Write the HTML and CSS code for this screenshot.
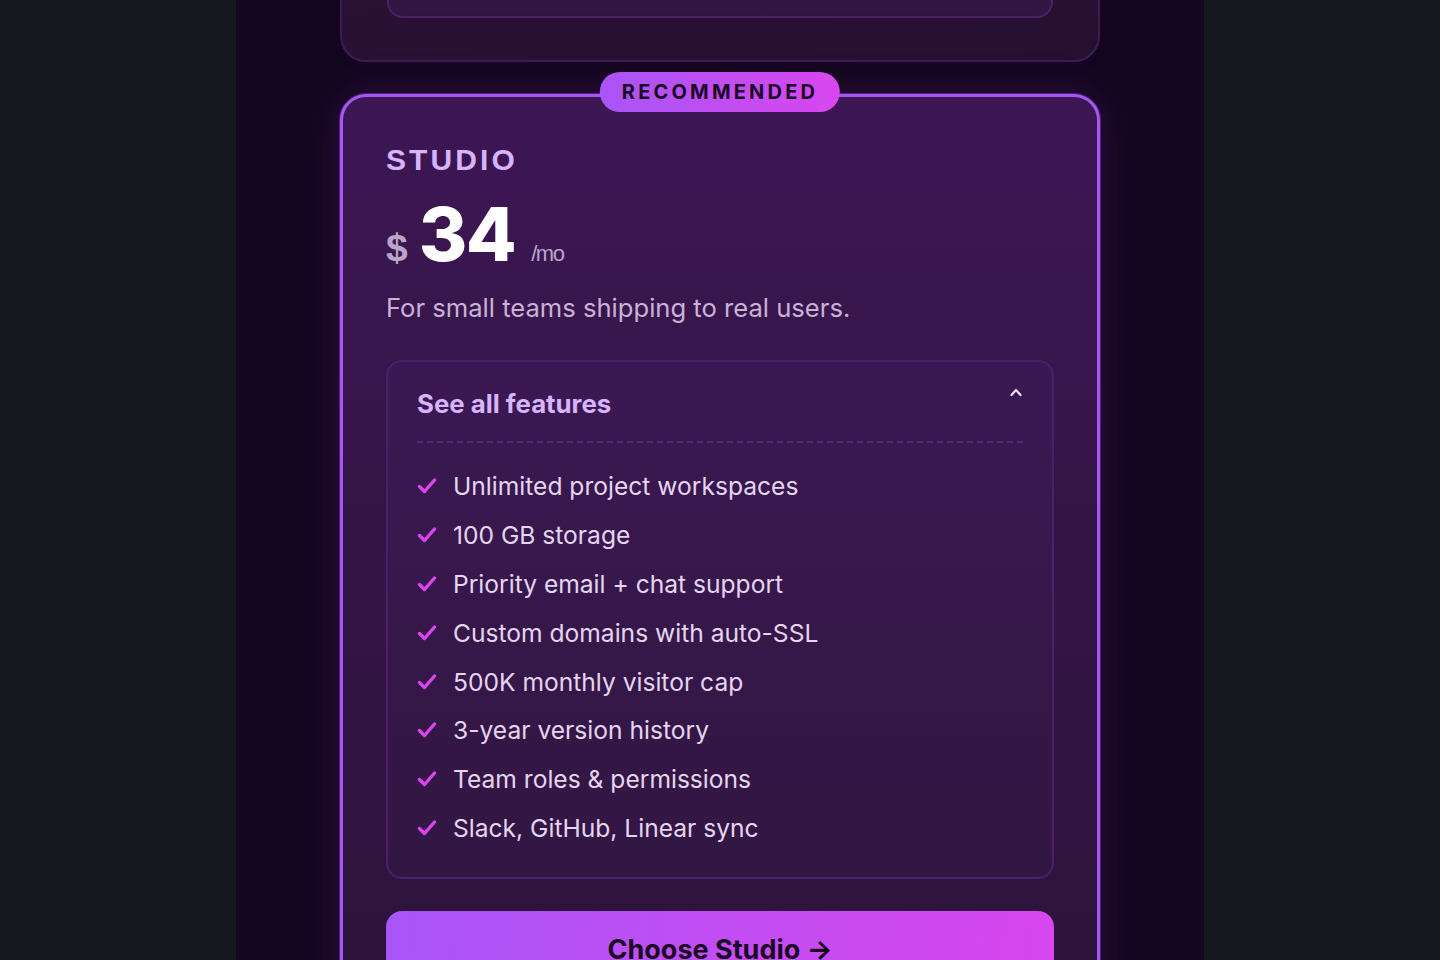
FILE: index.html
```html
<!DOCTYPE html>
<html lang="en">
<head>
    <meta charset="UTF-8">
    <meta name="viewport" content="width=device-width, initial-scale=1.0">
    <title>Pricing - Studio</title>
    <link rel="stylesheet" href="styles.css">
</head>
<body>
    <main class="page">
        <div class="plans">
            <section class="plan plan-prev">
                <h2 class="plan-name">TEAM</h2>
                <div class="features features-prev"></div>
            </section>

            <section class="plan plan-featured">
                <div class="badge">RECOMMENDED</div>
                <h2 class="plan-name">STUDIO</h2>
                <div class="price">
                    <span class="currency">$</span>
                    <span class="amount">34</span>
                    <span class="period">/mo</span>
                </div>
                <p class="tagline">For small teams shipping to real users.</p>

                <div class="features">
                    <div class="features-head">
                        <span>See all features</span>
                        <svg class="chevron" width="14" height="10" viewBox="0 0 14 10">
                            <path d="M2.5 8 L7 3 L11.5 8" fill="none" stroke="#ecdcfb" stroke-width="2.2" stroke-linecap="round" stroke-linejoin="round"/>
                        </svg>
                    </div>
                    <ul class="feature-list">
                        <li><svg class="check" viewBox="0 0 20 16"><path d="M2.5 8.5 L7.5 13.5 L17.5 2" fill="none" stroke="#d946ef" stroke-width="3.4" stroke-linecap="round" stroke-linejoin="round"/></svg>Unlimited project workspaces</li>
                        <li><svg class="check" viewBox="0 0 20 16"><path d="M2.5 8.5 L7.5 13.5 L17.5 2" fill="none" stroke="#d946ef" stroke-width="3.4" stroke-linecap="round" stroke-linejoin="round"/></svg>100 GB storage</li>
                        <li><svg class="check" viewBox="0 0 20 16"><path d="M2.5 8.5 L7.5 13.5 L17.5 2" fill="none" stroke="#d946ef" stroke-width="3.4" stroke-linecap="round" stroke-linejoin="round"/></svg>Priority email + chat support</li>
                        <li><svg class="check" viewBox="0 0 20 16"><path d="M2.5 8.5 L7.5 13.5 L17.5 2" fill="none" stroke="#d946ef" stroke-width="3.4" stroke-linecap="round" stroke-linejoin="round"/></svg>Custom domains with auto-SSL</li>
                        <li><svg class="check" viewBox="0 0 20 16"><path d="M2.5 8.5 L7.5 13.5 L17.5 2" fill="none" stroke="#d946ef" stroke-width="3.4" stroke-linecap="round" stroke-linejoin="round"/></svg>500K monthly visitor cap</li>
                        <li><svg class="check" viewBox="0 0 20 16"><path d="M2.5 8.5 L7.5 13.5 L17.5 2" fill="none" stroke="#d946ef" stroke-width="3.4" stroke-linecap="round" stroke-linejoin="round"/></svg>3-year version history</li>
                        <li><svg class="check" viewBox="0 0 20 16"><path d="M2.5 8.5 L7.5 13.5 L17.5 2" fill="none" stroke="#d946ef" stroke-width="3.4" stroke-linecap="round" stroke-linejoin="round"/></svg>Team roles &amp; permissions</li>
                        <li><svg class="check" viewBox="0 0 20 16"><path d="M2.5 8.5 L7.5 13.5 L17.5 2" fill="none" stroke="#d946ef" stroke-width="3.4" stroke-linecap="round" stroke-linejoin="round"/></svg>Slack, GitHub, Linear sync</li>
                    </ul>
                </div>

                <button class="choose-btn">Choose Studio &rarr;</button>
            </section>
        </div>
    </main>
</body>
</html>
```

FILE: styles.css
```css
* {
    margin: 0;
    padding: 0;
    box-sizing: border-box;
}

html, body {
    height: 100%;
    overflow: hidden;
}

body {
    background: #17171e;
    font-family: 'Inter', 'Noto Sans', sans-serif;
}

.page {
    width: 968px;
    min-height: 100%;
    margin: 0 auto;
    background: #14061f;
}

.plans {
    width: 760px;
    margin: 0 auto;
    display: flex;
    flex-direction: column;
    gap: 32px;
    margin-top: -266px;
    padding-bottom: 40px;
}

.plan {
    position: relative;
    border-radius: 26px;
    padding: 42px 45px;
}

.plan-prev {
    background: linear-gradient(160deg, #2d1339, #261030);
    border: 2px solid #3d1c55;
}

.plan-prev .plan-name {
    margin-bottom: 100px;
}

.features-prev {
    height: 100px;
    background: #3a1a50;
    border-color: #5a2c84;
}

.plan-featured {
    background: linear-gradient(180deg, #3d1654 0%, #2c1339 100%);
    border: 3px solid #a855f7;
    padding: 43px 43px;
    box-shadow: 0 0 0 1px rgba(168, 85, 247, 0.35), 0 0 40px rgba(130, 50, 190, 0.22);
}

.badge {
    position: absolute;
    top: -25px;
    left: 50%;
    transform: translateX(-50%);
    height: 40px;
    padding: 0 22px;
    border-radius: 20px;
    background: linear-gradient(90deg, #a855f7, #d946ef);
    color: #1a0824;
    font-weight: 700;
    font-size: 20px;
    letter-spacing: 3.2px;
    line-height: 40px;
    white-space: nowrap;
}

.plan-name {
    font-family: 'Liberation Sans', Arial, sans-serif;
    font-size: 30px;
    font-weight: 700;
    letter-spacing: 3.1px;
    color: #d8b4fe;
    line-height: 40px;
}

.price {
    display: flex;
    align-items: baseline;
    margin-top: 16px;
    font-weight: 700;
}

.currency {
    font-family: 'Liberation Sans', Arial, sans-serif;
    font-size: 39px;
    color: #b9a5c9;
    margin-right: 11px;
}

.amount {
    font-family: 'Inter', sans-serif;
    font-size: 74px;
    font-weight: 800;
    line-height: 76px;
    color: #ffffff;
    letter-spacing: -1.5px;
    margin-right: 16px;
}

.period {
    font-family: 'Liberation Sans', Arial, sans-serif;
    font-size: 22px;
    font-weight: 400;
    color: #b9a5c9;
    letter-spacing: -1.5px;
}

.tagline {
    margin-top: 20px;
    font-size: 25.6px;
    line-height: 32px;
    color: #c8b3d6;
}

.features {
    margin-top: 36px;
    border: 2px solid #4a2168;
    border-radius: 16px;
    background: linear-gradient(180deg, #3b1853, #321642);
    padding: 27px 29px 33px;
}

.features-head {
    display: flex;
    justify-content: space-between;
    align-items: flex-start;
    padding-bottom: 22px;
    border-bottom: 2px dashed #532779;
    font-size: 25.8px;
    font-weight: 700;
    line-height: 30px;
    color: #d8b4fe;
}

.chevron {
    margin-top: -2px;
}

.feature-list {
    list-style: none;
    margin-top: 27px;
    display: flex;
    flex-direction: column;
    gap: 16.9px;
}

.feature-list li {
    display: flex;
    align-items: center;
    font-size: 24.6px;
    line-height: 32px;
    color: #e4d6ef;
}

.check {
    width: 20px;
    height: 16px;
    margin-right: 16px;
    flex-shrink: 0;
}

.choose-btn {
    margin-top: 32px;
    width: 100%;
    height: 76px;
    border: none;
    border-radius: 16px;
    background: linear-gradient(100deg, #a855f7, #d946ef);
    color: #1a0824;
    font-family: 'Inter', 'Noto Sans', sans-serif;
    font-size: 27px;
    font-weight: 700;
    cursor: pointer;
}
```
